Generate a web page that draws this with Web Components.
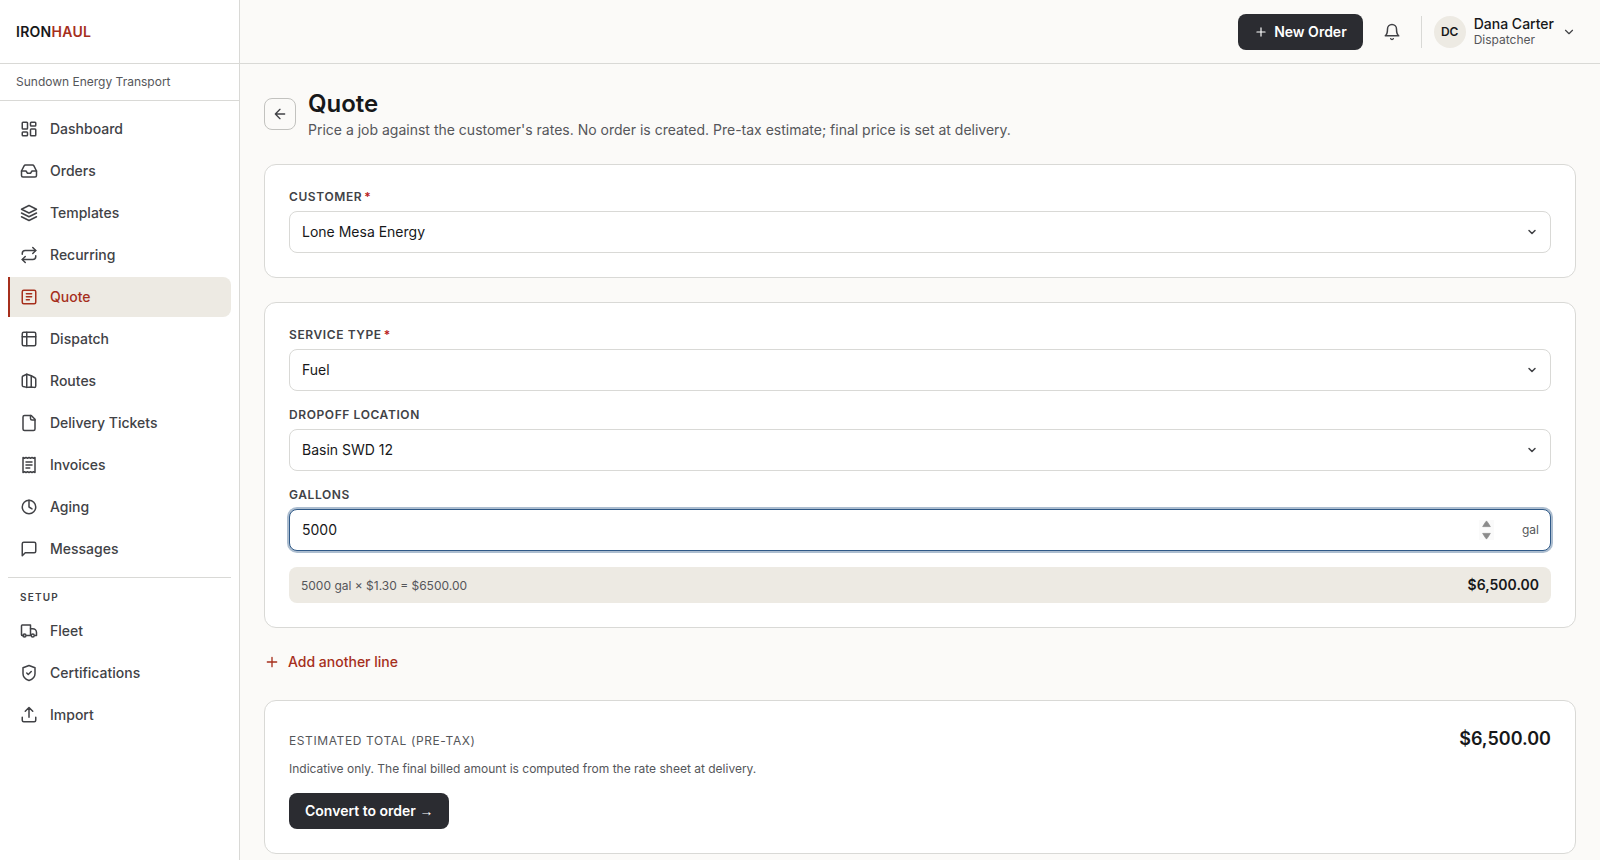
<!DOCTYPE html>
<html lang="en">
<head>
<meta charset="UTF-8">
<meta name="viewport" content="width=device-width, initial-scale=1">
<title>Quote - Ironhaul</title>
<style>
    :root {
        --bg: #fbfaf8;
        --surface: #ffffff;
        --muted: #edeae3;
        --border: #d9d9d6;
        --border-strong: #c2c2bf;
        --ink: #17181a;
        --ink-2: #414246;
        --ink-3: #55565a;
        --accent: #a62f1c;
        --danger: #b91c1c;
        --dark: #2b2c31;
        --focus: #2f5987;
    }

    body {
        margin: 0;
        height: 100vh;
        overflow: hidden;
        background: var(--bg);
        color: var(--ink);
        font-family: Inter, "Liberation Sans", sans-serif;
        font-size: 14px;
        line-height: 20px;
    }
</style>
</head>
<body>
<app-shell>
    <side-nav slot="nav">
        <nav-item icon="dashboard">Dashboard</nav-item>
        <nav-item icon="inbox">Orders</nav-item>
        <nav-item icon="layers">Templates</nav-item>
        <nav-item icon="repeat">Recurring</nav-item>
        <nav-item icon="quote" active>Quote</nav-item>
        <nav-item icon="table">Dispatch</nav-item>
        <nav-item icon="map">Routes</nav-item>
        <nav-item icon="file">Delivery Tickets</nav-item>
        <nav-item icon="receipt">Invoices</nav-item>
        <nav-item icon="clock">Aging</nav-item>
        <nav-item icon="message">Messages</nav-item>
        <nav-item slot="setup" icon="truck">Fleet</nav-item>
        <nav-item slot="setup" icon="shield">Certifications</nav-item>
        <nav-item slot="setup" icon="upload">Import</nav-item>
    </side-nav>

    <top-bar slot="header" name="Dana Carter" role-name="Dispatcher" initials="DC"></top-bar>

    <page-head>
        Quote
        <span slot="sub">Price a job against the customer's rates. No order is created. Pre-tax estimate; final price is set at delivery.</span>
    </page-head>

    <ui-card>
        <form-field label="Customer" required chevron>Lone Mesa Energy</form-field>
    </ui-card>

    <ui-card>
        <form-field label="Service type" required chevron>Fuel</form-field>
        <form-field label="Dropoff location" chevron>Basin SWD 12</form-field>
        <form-field label="Gallons" unit="gal" focused>5000</form-field>
        <line-total amount="$6,500.00">5000 gal × $1.30 = $6500.00</line-total>
    </ui-card>

    <add-line>Add another line</add-line>

    <ui-card>
        <quote-total amount="$6,500.00"></quote-total>
    </ui-card>
</app-shell>

<script>
const icons = {
    dashboard: '<rect width="7" height="9" x="3" y="3" rx="1"/><rect width="7" height="5" x="14" y="3" rx="1"/><rect width="7" height="9" x="14" y="12" rx="1"/><rect width="7" height="5" x="3" y="16" rx="1"/>',
    inbox: '<path d="M22 12h-6l-2 3h-4l-2-3H2"/><path d="M5.45 5.11 2 12v6a2 2 0 0 0 2 2h16a2 2 0 0 0 2-2v-6l-3.45-6.89A2 2 0 0 0 16.76 4H7.24a2 2 0 0 0-1.79 1.11z"/>',
    layers: '<path d="m12 2 10 5-10 5L2 7z"/><path d="m2 12 10 5 10-5"/><path d="m2 17 10 5 10-5"/>',
    repeat: '<path d="m17 2 4 4-4 4"/><path d="M3 11v-1a4 4 0 0 1 4-4h14"/><path d="m7 22-4-4 4-4"/><path d="M21 13v1a4 4 0 0 1-4 4H3"/>',
    quote: '<rect width="18" height="18" x="3" y="3" rx="2"/><path d="M8.500 7.500h7M8.500 11.500h7M8.500 15.500h4"/>',
    table: '<rect width="18" height="18" x="3" y="3" rx="2"/><path d="M3 9h18M9 3v18"/>',
    map: '<path d="M9 3 4 5.300A2 2 0 0 0 3 7v10.500a2 2 0 0 0 1.200 1.800L9 20.500l6-.5 4 .5a2 2 0 0 0 2-2V9.500a2 2 0 0 0-1.200-1.800L15 5z"/><path d="M9 3v17.500M15 5v15"/>',
    file: '<path d="M15 2H6a2 2 0 0 0-2 2v16a2 2 0 0 0 2 2h12a2 2 0 0 0 2-2V7z"/><path d="M14 2v4a2 2 0 0 0 2 2h4"/>',
    receipt: '<path d="M4 2v20l2-1 2 1 2-1 2 1 2-1 2 1 2-1 2 1V2l-2 1-2-1-2 1-2-1-2 1-2-1-2 1z"/><path d="M8 8h8M8 12h8M8 16h5"/>',
    clock: '<circle cx="12" cy="12" r="9"/><path d="M12 3v9l4 2.500"/>',
    message: '<path d="M21 15a2 2 0 0 1-2 2H7l-4 4V5a2 2 0 0 1 2-2h14a2 2 0 0 1 2 2z"/>',
    truck: '<path d="M5 18H3a1 1 0 0 1-1-1V5a1 1 0 0 1 1-1h11v14H9"/><path d="M14 9h3a5 5 0 0 1 5 5v4h-2"/><circle cx="6" cy="18" r="2"/><circle cx="17" cy="18" r="2"/>',
    shield: '<path d="M20 13c0 5-3.500 7.500-8 9-4.500-1.500-8-4-8-9V5l8-3 8 3z"/><path d="m9 12 2 2 4-4"/>',
    upload: '<path d="M21 15v4a2 2 0 0 1-2 2H5a2 2 0 0 1-2-2v-4"/><path d="m7 7 5-5 5 5M12 2v13"/>',
    plus: '<path d="M5 12h14M12 5v14"/>',
    bell: '<path d="M6 8a6 6 0 0 1 12 0c0 7 3 9 3 9H3s3-2 3-9"/><path d="M10.300 21a1.940 1.940 0 0 0 3.400 0"/>',
    chevron: '<path d="m6 9 6 6 6-6"/>',
    back: '<path d="m12 19-7-7 7-7M19 12H5"/>'
};

function icon(name, size, stroke = 2) {
    return `<svg width="${size}" height="${size}" viewBox="0 0 24 24" fill="none" stroke="currentColor" stroke-width="${stroke}" stroke-linecap="round" stroke-linejoin="round" aria-hidden="true">${icons[name]}</svg>`;
}

class BaseElement extends HTMLElement {
    constructor() {
        super();
        this.attachShadow({ mode: 'open' });
    }

    connectedCallback() {
        this.shadowRoot.innerHTML = `
            <style>
                * { box-sizing: border-box; }
                svg { display: block; flex: none; }
                button { font: inherit; color: inherit; margin: 0; cursor: pointer; }
            </style>
            ${this.render()}
        `;
    }
}

class AppShell extends BaseElement {
    render() {
        return `
            <style>
                :host {
                    display: grid;
                    grid-template-columns: 240px 1fr;
                    height: 100vh;
                }
                .content {
                    display: flex;
                    flex-direction: column;
                    min-width: 0;
                }
                main {
                    display: flex;
                    flex-direction: column;
                    gap: 24px;
                    padding: 24px;
                }
            </style>
            <slot name="nav"></slot>
            <div class="content">
                <slot name="header"></slot>
                <main><slot></slot></main>
            </div>
        `;
    }
}
customElements.define('app-shell', AppShell);

class SideNav extends BaseElement {
    render() {
        return `
            <style>
                :host {
                    display: flex;
                    flex-direction: column;
                    box-sizing: border-box;
                    background: var(--surface);
                    border-right: 1px solid var(--border);
                }
                .brand {
                    display: flex;
                    align-items: center;
                    height: 64px;
                    padding: 0 16px;
                    border-bottom: 1px solid var(--border);
                    font-weight: 600;
                    letter-spacing: 0.28px;
                }
                .brand span { color: var(--accent); }
                .company {
                    height: 37px;
                    padding: 8px 16px;
                    border-bottom: 1px solid var(--border);
                    color: var(--ink-3);
                    font-size: 12px;
                }
                nav {
                    display: flex;
                    flex-direction: column;
                    gap: 2px;
                    padding: 8px;
                }
                .group {
                    margin-top: 6px;
                    padding: 11px 12px 4px;
                    border-top: 1px solid var(--border);
                    color: var(--ink-2);
                    font-size: 10px;
                    font-weight: 600;
                    line-height: 16px;
                    letter-spacing: 1.2px;
                }
            </style>
            <div class="brand">IRON<span>HAUL</span></div>
            <div class="company">Sundown Energy Transport</div>
            <nav>
                <slot></slot>
                <div class="group">SETUP</div>
                <slot name="setup"></slot>
            </nav>
        `;
    }
}
customElements.define('side-nav', SideNav);

class NavItem extends BaseElement {
    render() {
        return `
            <style>
                :host {
                    display: flex;
                    align-items: center;
                    gap: 12px;
                    box-sizing: border-box;
                    height: 40px;
                    padding: 0 10px;
                    border-left: 2px solid transparent;
                    color: var(--ink-2);
                    font-weight: 500;
                    cursor: pointer;
                }
                :host([active]) {
                    border-left-color: var(--accent);
                    border-radius: 0 8px 8px 0;
                    background: var(--muted);
                    color: var(--accent);
                }
            </style>
            ${icon(this.getAttribute('icon'), 18)}
            <slot></slot>
        `;
    }
}
customElements.define('nav-item', NavItem);

class TopBar extends BaseElement {
    render() {
        return `
            <style>
                :host {
                    display: flex;
                    align-items: center;
                    justify-content: flex-end;
                    box-sizing: border-box;
                    height: 64px;
                    padding: 0 24px;
                    border-bottom: 1px solid var(--border);
                }
                .new {
                    display: flex;
                    align-items: center;
                    gap: 6px;
                    height: 36px;
                    padding: 0 16px;
                    border: 0;
                    border-radius: 8px;
                    background: var(--dark);
                    color: #fff;
                    font-weight: 600;
                }
                .bell {
                    display: grid;
                    place-items: center;
                    width: 36px;
                    height: 36px;
                    margin: 0 11px;
                    padding: 0;
                    border: 0;
                    background: none;
                    color: var(--ink-2);
                }
                .user {
                    display: flex;
                    align-items: center;
                    height: 32px;
                    padding-left: 12px;
                    border-left: 1px solid var(--border);
                    color: var(--ink-2);
                }
                .avatar {
                    display: grid;
                    place-items: center;
                    width: 32px;
                    height: 32px;
                    margin-right: 8px;
                    border-radius: 50%;
                    background: var(--muted);
                    color: var(--ink);
                    font-size: 12px;
                    font-weight: 600;
                }
                .who {
                    margin-right: 8px;
                    padding-bottom: 2px;
                }
                .name {
                    color: var(--ink);
                    font-weight: 500;
                    line-height: 17px;
                }
                .role {
                    color: var(--ink-3);
                    font-size: 12px;
                    line-height: 15px;
                }
            </style>
            <button class="new">${icon('plus', 14)}New Order</button>
            <button class="bell" aria-label="Notifications">${icon('bell', 18)}</button>
            <div class="user">
                <div class="avatar">${this.getAttribute('initials')}</div>
                <div class="who">
                    <div class="name">${this.getAttribute('name')}</div>
                    <div class="role">${this.getAttribute('role-name')}</div>
                </div>
                ${icon('chevron', 14)}
            </div>
        `;
    }
}
customElements.define('top-bar', TopBar);

class PageHead extends BaseElement {
    render() {
        return `
            <style>
                :host {
                    display: flex;
                    align-items: center;
                    gap: 12px;
                }
                button {
                    display: grid;
                    place-items: center;
                    width: 32px;
                    height: 32px;
                    padding: 0;
                    border: 1px solid var(--border-strong);
                    border-radius: 8px;
                    background: var(--bg);
                    color: var(--ink-2);
                }
                h1 {
                    margin: 0;
                    font-size: 24px;
                    font-weight: 600;
                    line-height: 32px;
                }
                .sub { color: var(--ink-3); }
            </style>
            <button aria-label="Back">${icon('back', 16)}</button>
            <div>
                <h1><slot></slot></h1>
                <div class="sub"><slot name="sub"></slot></div>
            </div>
        `;
    }
}
customElements.define('page-head', PageHead);

class UiCard extends BaseElement {
    render() {
        return `
            <style>
                :host {
                    display: flex;
                    flex-direction: column;
                    gap: 16px;
                    padding: 24px;
                    border: 1px solid var(--border);
                    border-radius: 12px;
                    background: var(--surface);
                }
            </style>
            <slot></slot>
        `;
    }
}
customElements.define('ui-card', UiCard);

class FormField extends BaseElement {
    render() {
        const unit = this.getAttribute('unit');
        return `
            <style>
                :host { display: block; }
                .label {
                    display: flex;
                    gap: 2px;
                    margin-bottom: 6px;
                    color: var(--ink-2);
                    font-size: 12px;
                    font-weight: 600;
                    line-height: 16px;
                    letter-spacing: 0.6px;
                }
                .label b { color: var(--danger); font-weight: 600; }
                .control {
                    display: flex;
                    align-items: center;
                    height: 42px;
                    padding: 0 12px;
                    border: 1px solid var(--border);
                    border-radius: 8px;
                    background: var(--surface);
                }
                :host([focused]) .control {
                    border-color: var(--focus);
                    box-shadow: 0 0 0 2px rgba(47, 89, 135, 0.4);
                    padding-right: 11px;
                }
                .value { flex: 1; }
                .control > svg { color: var(--ink-2); }
                .spin {
                    width: 15px;
                    height: 20px;
                    margin-right: 28px;
                    background: #fafafa;
                }
                .unit { color: var(--ink-3); font-size: 12px; }
            </style>
            <div class="label"><span>${this.getAttribute('label').toUpperCase()}</span>${this.hasAttribute('required') ? '<b>*</b>' : ''}</div>
            <div class="control">
                <span class="value"><slot></slot></span>
                ${this.hasAttribute('chevron') ? icon('chevron', 12, 3) : ''}
                ${unit ? `
                    <svg class="spin" viewBox="0 0 15 20" fill="#8a8a8a" stroke="#8a8a8a" stroke-width="0.8" stroke-linejoin="round"><path d="M3.700 6.600 7 1.400h1l3.300 5.200zM3.700 13.400h7.600L8 18.600H7z"/></svg>
                    <span class="unit">${unit}</span>
                ` : ''}
            </div>
        `;
    }
}
customElements.define('form-field', FormField);

class LineTotal extends BaseElement {
    render() {
        return `
            <style>
                :host {
                    display: flex;
                    align-items: center;
                    justify-content: space-between;
                    height: 36px;
                    padding: 0 12px;
                    border-radius: 8px;
                    background: var(--muted);
                    color: var(--ink-3);
                    font-size: 12px;
                }
                span { padding-top: 2px; }
                strong {
                    color: var(--ink);
                    font-size: 14px;
                    font-weight: 600;
                }
            </style>
            <span><slot></slot></span>
            <strong>${this.getAttribute('amount')}</strong>
        `;
    }
}
customElements.define('line-total', LineTotal);

class AddLine extends BaseElement {
    render() {
        return `
            <style>
                :host { display: flex; height: 24px; }
                button {
                    display: flex;
                    align-items: center;
                    gap: 8px;
                    height: 20px;
                    padding: 0;
                    border: 0;
                    background: none;
                    color: var(--accent);
                    font-weight: 500;
                }
            </style>
            <button>${icon('plus', 16)}<slot></slot></button>
        `;
    }
}
customElements.define('add-line', AddLine);

class QuoteTotal extends BaseElement {
    render() {
        return `
            <style>
                :host { display: block; }
                .row {
                    display: flex;
                    align-items: baseline;
                    justify-content: space-between;
                    height: 28px;
                }
                .label {
                    color: var(--ink-3);
                    font-size: 12px;
                    letter-spacing: 0.6px;
                }
                .amount {
                    font-size: 18px;
                    font-weight: 600;
                    line-height: 28px;
                }
                p {
                    margin: 8px 0 16px;
                    color: var(--ink-3);
                    font-size: 12px;
                    line-height: 16px;
                }
                button {
                    width: 160px;
                    height: 36px;
                    padding: 0 0 0 16px;
                    border: 0;
                    border-radius: 8px;
                    background: var(--dark);
                    color: #fff;
                    font-weight: 600;
                    text-align: left;
                    white-space: nowrap;
                }
                .arrow {
                    font-family: "Liberation Sans", sans-serif;
                    font-weight: 400;
                }
            </style>
            <div class="row">
                <span class="label">ESTIMATED TOTAL (PRE-TAX)</span>
                <span class="amount">${this.getAttribute('amount')}</span>
            </div>
            <p>Indicative only. The final billed amount is computed from the rate sheet at delivery.</p>
            <button>Convert to order <span class="arrow">→</span></button>
        `;
    }
}
customElements.define('quote-total', QuoteTotal);
</script>
</body>
</html>
